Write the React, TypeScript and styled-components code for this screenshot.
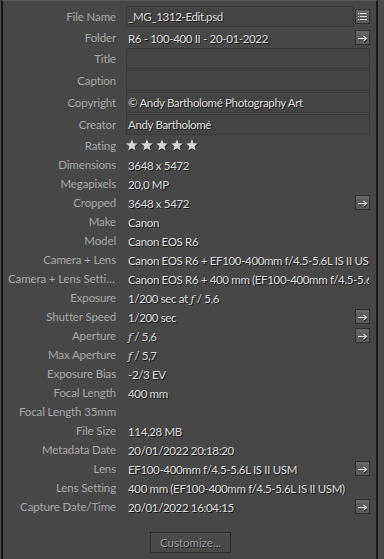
import React from "react";
import styled, { createGlobalStyle } from "styled-components";

const Global = createGlobalStyle`
  html, body { margin: 0; padding: 0; background: #4a4a4a; }
  body { font-family: Lato, "Open Sans", sans-serif; font-size: 11.5px; }
`;

const Frame = styled.div`
  width: 384px;
  height: 559px;
  box-sizing: border-box;
  padding-left: 1px;
  background: #4b4b4b;
  overflow: hidden;
`;

const Panel = styled.div`
  width: 377px;
  height: 559px;
  box-sizing: border-box;
  border-left: 2px solid #161616;
  border-right: 2px solid #1a1a1a;
  border-top: 1px solid #555;
  background: #474747;
  padding-top: 5px;
  display: flex;
  flex-direction: column;
`;

const Row = styled.div<{ $h: number }>`
  display: flex;
  align-items: flex-start;
  height: ${(p) => p.$h}px;
  line-height: ${(p) => p.$h}px;
  flex: none;
`;

const Label = styled.div<{ $lh: number }>`
  width: 108px;
  margin-left: 5px;
  flex: none;
  text-align: right;
  color: #a8a8a8;
  letter-spacing: -0.12px;
  white-space: nowrap;
  overflow: hidden;
  text-overflow: ellipsis;
  line-height: ${(p) => p.$lh}px;
`;

const ValueArea = styled.div`
  flex: 1;
  min-width: 0;
  margin-left: 10px;
  margin-right: 6px;
  display: flex;
  align-items: flex-start;
  gap: 1px;
`;

const Field = styled.div<{ $boxed?: boolean; $lh: number }>`
  flex: 1;
  min-width: 0;
  height: ${(p) => p.$lh}px;
  line-height: ${(p) => (p.$boxed ? p.$lh - 2 : p.$lh)}px;
  box-sizing: border-box;
  border: 1px solid ${(p) => (p.$boxed ? "#393939" : "transparent")};
  background: ${(p) => (p.$boxed ? "#444444" : "transparent")};
  padding-left: 1px;
  color: #dcdcdc;
  letter-spacing: -0.35px;
  text-shadow: 1px 1px 0 #1c1c1c;
  white-space: nowrap;
  overflow: hidden;
`;

const Italic = styled.span`
  font-family: "DejaVu Serif", serif;
  font-style: italic;
  font-size: 11px;
`;

const IconButton = styled.button<{ $lh: number }>`
  flex: none;
  width: 15px;
  height: 15px;
  margin-top: ${(p) => Math.round((p.$lh - 15) / 2)}px;
  padding: 0;
  border: 0;
  background: none;
  display: block;
`;

const Stars = styled.div`
  display: flex;
  gap: 3px;
  padding-top: 3px;
`;

const Footer = styled.div`
  display: flex;
  justify-content: center;
  padding-top: 16px;
  padding-left: 2px;
`;

const Customize = styled.button`
  width: 81px;
  height: 21px;
  box-sizing: border-box;
  border: 1px solid #2b2b2b;
  box-shadow: inset 0 1px 0 #535353;
  background: #4a4a4a;
  color: #9c9c9c;
  font-family: Lato, "Open Sans", sans-serif;
  font-size: 11.5px;
  line-height: 18px;
  padding: 0;
  text-shadow: 1px 1px 0 #222;
`;

const ButtonFrame = () => (
  <>
    <rect x="0.5" y="0.5" width="14" height="14" fill="#5b5b5b" stroke="#303030" />
    <rect x="1" y="1" width="13" height="3" fill="#666" />
  </>
);

const ArrowIcon = () => (
  <svg width="15" height="15" viewBox="0 0 15 15">
    <ButtonFrame />
    <path d="M3 9.2 H10.5 M8.5 6.5 L11.5 9.2 L8.5 11.9" fill="none" stroke="#222" strokeWidth="1.1" transform="translate(0.5,0.6)" />
    <path d="M3 8.6 H10.5 M8.5 6 L11.5 8.6 L8.5 11.2" fill="none" stroke="#e2e2e2" strokeWidth="1.1" />
  </svg>
);

const MenuIcon = () => (
  <svg width="15" height="15" viewBox="0 0 15 15">
    <ButtonFrame />
    <g fill="#e0e0e0">
      <rect x="3" y="4" width="1.2" height="1.2" />
      <rect x="5" y="4" width="7" height="1" />
      <rect x="3" y="7" width="1.2" height="1.2" />
      <rect x="5" y="7" width="7" height="1" />
      <rect x="3" y="10" width="1.2" height="1.2" />
      <rect x="5" y="10" width="7" height="1" />
    </g>
  </svg>
);

const Star = () => (
  <svg width="12" height="12" viewBox="0 0 24 24" style={{ overflow: "visible" }}>
    <polygon
      points="12,0.5 15.1,8.3 23.6,9 17.2,14.6 19.3,23.2 12,18.6 4.7,23.2 6.8,14.6 0.4,9 8.9,8.3"
      fill="#1e1e1e"
      transform="translate(1.5,1.5)"
    />
    <polygon points="12,0.5 15.1,8.3 23.6,9 17.2,14.6 19.3,23.2 12,18.6 4.7,23.2 6.8,14.6 0.4,9 8.9,8.3" fill="#d6d6d6" />
  </svg>
);

type Item = {
  label: string;
  value?: React.ReactNode;
  h: number;
  boxed?: boolean;
  action?: "menu" | "arrow";
  stars?: boolean;
};

const items: Item[] = [
  { label: "File Name", value: "_MG_1312-Edit.psd", h: 21, boxed: true, action: "menu" },
  { label: "Folder", value: "R6 - 100-400 II - 20-01-2022", h: 21, action: "arrow" },
  { label: "Title", value: "", h: 22, boxed: true },
  { label: "Caption", value: "", h: 22, boxed: true },
  { label: "Copyright", value: "© Andy Bartholomé Photography Art", h: 22, boxed: true },
  { label: "Creator", value: "Andy Bartholomé", h: 22, boxed: true },
  { label: "Rating", h: 19, stars: true },
  { label: "Dimensions", value: "3648 x 5472", h: 19 },
  { label: "Megapixels", value: "20,0 MP", h: 19 },
  { label: "Cropped", value: "3648 x 5472", h: 19, action: "arrow" },
  { label: "Make", value: "Canon", h: 19 },
  { label: "Model", value: "Canon EOS R6", h: 19 },
  { label: "Camera + Lens", value: "Canon EOS R6 + EF100-400mm f/4.5-5.6L IS II USM", h: 19 },
  { label: "Camera + Lens Setting", value: "Canon EOS R6 + 400 mm (EF100-400mm f/4.5-5.6L IS II USM)", h: 19 },
  {
    label: "Exposure",
    value: (
      <>
        1/200 sec at <Italic>ƒ</Italic> / 5,6
      </>
    ),
    h: 19,
  },
  { label: "Shutter Speed", value: "1/200 sec", h: 19, action: "arrow" },
  {
    label: "Aperture",
    value: (
      <>
        <Italic>ƒ</Italic> / 5,6
      </>
    ),
    h: 19,
    action: "arrow",
  },
  {
    label: "Max Aperture",
    value: (
      <>
        <Italic>ƒ</Italic> / 5,7
      </>
    ),
    h: 19,
  },
  { label: "Exposure Bias", value: "-2/3 EV", h: 19 },
  { label: "Focal Length", value: "400 mm", h: 19 },
  { label: "Focal Length 35mm", value: "", h: 19 },
  { label: "File Size", value: "114,28 MB", h: 19 },
  { label: "Metadata Date", value: "20/01/2022 20:18:20", h: 19 },
  { label: "Lens", value: "EF100-400mm f/4.5-5.6L IS II USM", h: 19, action: "arrow" },
  { label: "Lens Setting", value: "400 mm (EF100-400mm f/4.5-5.6L IS II USM)", h: 19 },
  { label: "Capture Date/Time", value: "20/01/2022 16:04:15", h: 19, action: "arrow" },
];

export default function App() {
  return (
    <>
      <Global />
      <Frame>
        <Panel>
          {items.map((it) => {
            const fh = it.boxed ? 21 : it.h;
            return (
              <Row key={it.label} $h={it.h}>
                <Label $lh={fh}>{it.label}</Label>
                <ValueArea>
                  {it.stars ? (
                    <Stars>
                      <Star />
                      <Star />
                      <Star />
                      <Star />
                      <Star />
                    </Stars>
                  ) : (
                    <Field $boxed={it.boxed} $lh={fh}>
                      {it.value}
                    </Field>
                  )}
                  {it.action && (
                    <IconButton $lh={fh} aria-label={it.action}>
                      {it.action === "menu" ? <MenuIcon /> : <ArrowIcon />}
                    </IconButton>
                  )}
                </ValueArea>
              </Row>
            );
          })}
          <Footer>
            <Customize>Customize...</Customize>
          </Footer>
        </Panel>
      </Frame>
    </>
  );
}
